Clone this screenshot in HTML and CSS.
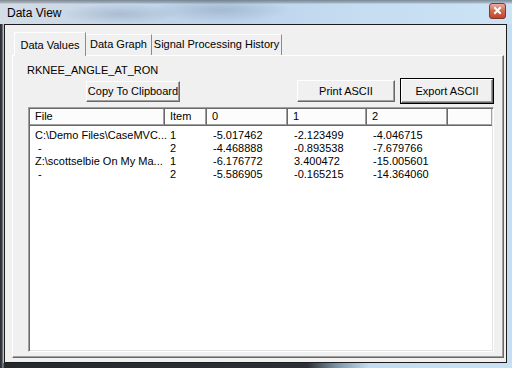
FILE: index.html
```html
<html>
<head>
  <title>Data View</title>
  <meta charset="utf-8" />
  <link rel="stylesheet" href="styles.css">
</head>
<body>

<div class="window">
  <div class="titlebar">
    <span class="title">Data View</span>
    <span class="close">
      <svg width="17" height="16" viewBox="0 0 17 16">
        <defs>
          <linearGradient id="cg" x1="0" y1="0" x2="0" y2="1">
            <stop offset="0" stop-color="#eab3a6"/>
            <stop offset="0.5" stop-color="#d4674f"/>
            <stop offset="1" stop-color="#c1412a"/>
          </linearGradient>
        </defs>
        <rect x="0.5" y="0.5" width="16" height="15" rx="2.5" fill="url(#cg)" stroke="#7a3a2c"/>
        <path d="M6 5 L11 10 M11 5 L6 10" stroke="#fff" stroke-width="2" stroke-linecap="square"/>
      </svg>
    </span>
  </div>

  <div class="client">
    <div class="tabs">
      <div class="tab active">Data Values</div>
      <div class="tab graph">Data Graph</div>
      <div class="tab history">Signal Processing History</div>
    </div>

    <div class="panel">
      <div class="var-name">RKNEE_ANGLE_AT_RON</div>

      <div class="button-row">
        <button class="btn copy">Copy To Clipboard</button>
        <span class="spacer"></span>
        <button class="btn print">Print ASCII</button>
        <button class="btn export">Export ASCII</button>
      </div>

      <div class="listview">
        <div class="lv-head">
          <div class="hcell">File</div>
          <div class="hcell">Item</div>
          <div class="hcell">0</div>
          <div class="hcell">1</div>
          <div class="hcell">2</div>
          <div class="hcell last"></div>
        </div>
        <div class="lv-body">
          <div class="row">
            <span class="c-file">C:\Demo Files\CaseMVC...</span><span class="c-item">1</span>
            <span>-5.017462</span><span>-2.123499</span><span>-4.046715</span>
          </div>
          <div class="row">
            <span class="c-file">&nbsp;-</span><span class="c-item">2</span>
            <span>-4.468888</span><span>-0.893538</span><span>-7.679766</span>
          </div>
          <div class="row">
            <span class="c-file">Z:\scottselbie On My Ma...</span><span class="c-item">1</span>
            <span>-6.176772</span><span>3.400472</span><span>-15.005601</span>
          </div>
          <div class="row">
            <span class="c-file">&nbsp;-</span><span class="c-item">2</span>
            <span>-5.586905</span><span>-0.165215</span><span>-14.364060</span>
          </div>
        </div>
      </div>
    </div>
  </div>
</div>

</body>
</html>
```

FILE: styles.css
```css
html, body {
	margin: 0;
	padding: 0;
}

body {
	font-family: "Liberation Sans", Arial, sans-serif;
	font-size: 11px;
	color: #000;
	background: #c5def3;
}

/* window frame */
.window {
	width: 512px;
	height: 368px;
	display: flex;
	flex-direction: column;
	box-sizing: border-box;
	background:
		linear-gradient(to right, #2a2e32 0, #3a3f44 2px, #9aa3ab 3px, rgba(0,0,0,0) 4px),
		linear-gradient(to right, #25292c 0, #2c3034 60%, #7f97ab 66%, #c3dcf1 72%, #c8e1f5 100%) bottom / 100% 5px no-repeat,
		#c5def3;
}

.titlebar {
	height: 24px;
	flex: none;
	display: flex;
	align-items: center;
	padding-left: 7px;
	padding-top: 1px;
	box-sizing: border-box;
	background:
		linear-gradient(to bottom, rgba(60,66,72,0.55) 0, rgba(60,66,72,0.25) 3px, rgba(0,0,0,0) 4px),
		radial-gradient(ellipse 60px 10px at 120px 14px, rgba(120,140,165,0.35), rgba(0,0,0,0)),
		radial-gradient(ellipse 70px 12px at 220px 10px, rgba(120,140,165,0.35), rgba(0,0,0,0)),
		linear-gradient(to right, #d4dde6 0, #c6d7e8 20%, #bcd3ea 45%, #c5dcf1 70%, #cde4f6 100%);
}

.title {
	font-size: 12px;
	flex: 1;
}

.close {
	width: 17px;
	height: 16px;
	margin-right: 6px;
	margin-top: -3px;
}

.close svg {
	display: block;
}

.client {
	flex: 1;
	margin: 0 5px 5px 4px;
	border: 1px solid #1c1c1c;
	background: #f0f0f0;
	padding: 7px 2px 4px 7px;
	display: flex;
	flex-direction: column;
}

/* tabs */
.tabs {
	display: flex;
	align-items: flex-start;
	height: 23px;
	padding-left: 2px;
	position: relative;
	z-index: 1;
}

.tab {
	height: 21px;
	margin-top: 2px;
	box-sizing: border-box;
	border-top: 1px solid #fff;
	border-right: 1px solid #8c8c8c;
	background: #f0f0f0;
	line-height: 19px;
	text-align: center;
}

.tab.active {
	width: 72px;
	height: 24px;
	margin-top: 0;
	border-left: 1px solid #fff;
	line-height: 24px;
}

.tab.graph {
	width: 66px;
}

.tab.history {
	width: 130px;
}

.panel {
	flex: 1;
	border: 1px solid;
	border-color: #fff #696969 #696969 #fff;
	box-shadow: inset -1px -1px #a0a0a0;
	padding: 7px 9px 4px 15px;
	display: flex;
	flex-direction: column;
}

.var-name {
	height: 14px;
	line-height: 14px;
	margin-left: -1px;
	font-size: 11px;
}

/* buttons */
.button-row {
	display: flex;
	align-items: center;
	height: 26px;
	margin-top: 1px;
}

.spacer {
	flex: 1;
}

.btn {
	font-family: "Liberation Sans", Arial, sans-serif;
	font-size: 11px;
	color: #000;
	background: #f0f0f0;
	border: 1px solid;
	border-color: #fff #696969 #696969 #fff;
	box-shadow: inset -1px -1px #a0a0a0;
	padding: 0;
	margin: 0;
	box-sizing: border-box;
}

.btn.copy {
	width: 94px;
	height: 21px;
	margin-left: 58px;
}

.btn.print {
	width: 98px;
	height: 22px;
	margin-right: 6px;
}

.btn.export {
	width: 92px;
	height: 24px;
	outline: 1px solid #000;
	margin-right: 1px;
}

/* list view */
.listview {
	margin-top: 3px;
	height: 245px;
	box-sizing: border-box;
	border: 1px solid;
	border-color: #a0a0a0 #fff #fff #a0a0a0;
	box-shadow: inset 1px 1px #696969, inset -1px -1px #e3e3e3;
	background: #fff;
	padding: 1px;
}

.lv-head,
.row {
	display: grid;
	grid-template-columns: 135px 42px 81px 79px 81px 1fr;
}

.hcell {
	height: 17px;
	line-height: 15px;
	box-sizing: border-box;
	padding-left: 5px;
	background: #fcfcfc;
	border-right: 1px solid #696969;
	border-bottom: 1px solid #696969;
	box-shadow: inset -1px -1px #a0a0a0, inset 1px 1px #fff;
}

.hcell.last {
	border-right: none;
}

.lv-body {
	padding-top: 3px;
}

.row {
	height: 13px;
	line-height: 13px;
}

.row span {
	padding-left: 6px;
	white-space: nowrap;
}

.row .c-file {
	padding-left: 5px;
}

.row .c-item {
	padding-left: 5px;
}
```
